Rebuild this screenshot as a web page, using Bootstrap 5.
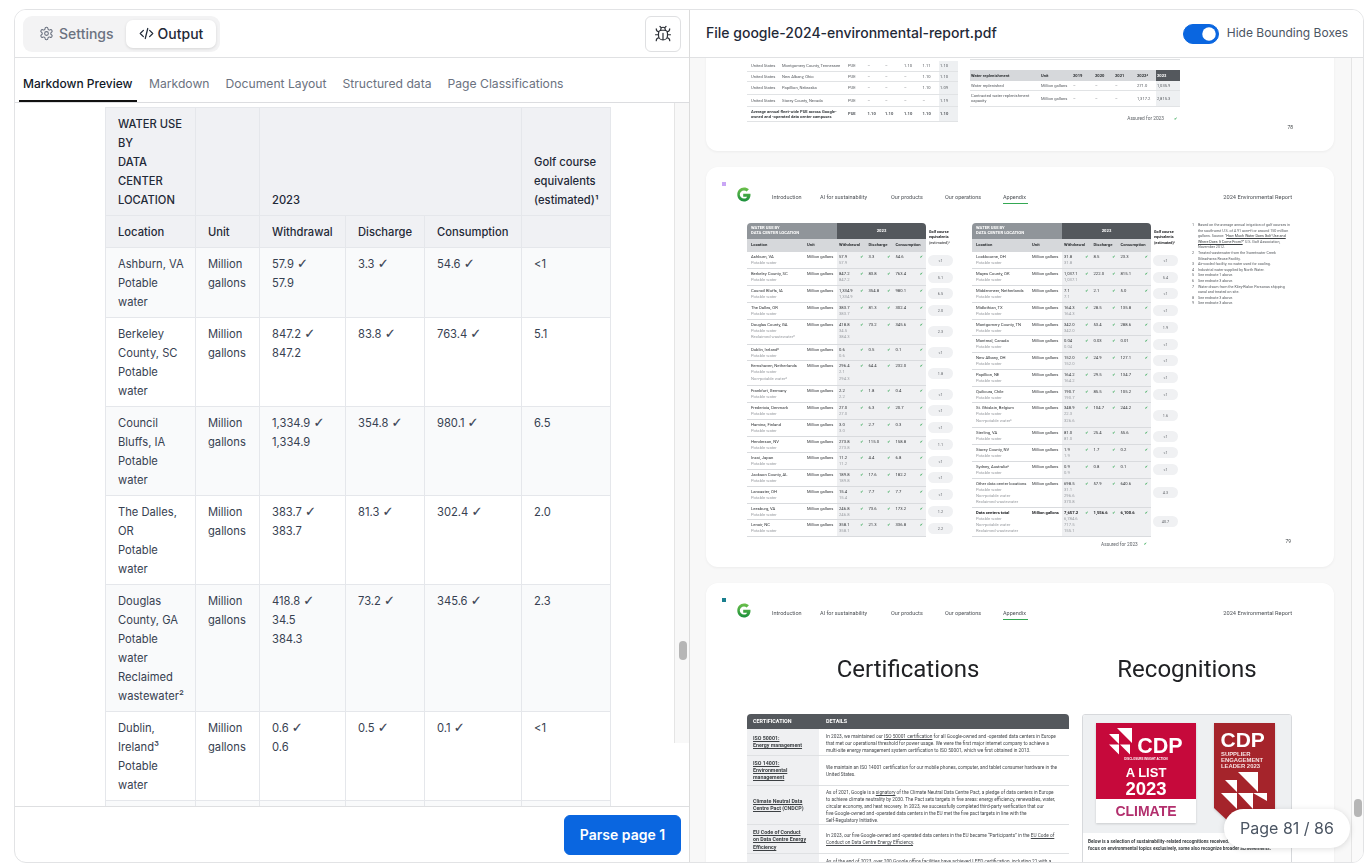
<!DOCTYPE html>
<html lang="en">
<head>
<meta charset="utf-8">
<title>Parse output</title>
<link rel="stylesheet" href="https://cdn.jsdelivr.net/npm/bootstrap@5.3.0/dist/css/bootstrap.min.css">
<style>
body{margin:0;padding:9px 5px 0 14px;height:863px;overflow:hidden;background:#fff;font-family:Inter,"Liberation Sans",sans-serif;color:#374151}
.shell{height:854px;border:1px solid #e2e3e5;border-radius:12px;overflow:hidden}
.leftp{width:675px;flex:none;border-right:1px solid #dcdcdc}
.rightp{flex:1 1 auto;min-width:0}
.topbar{height:48px;flex:none;border-bottom:1px solid #e0e1e3;background:#fff}
.seg{margin-left:8px;background:#f3f3f4;border-radius:9px;padding:4px;height:36px;width:197px}
.segb{height:28px;border:0;background:transparent;border-radius:7px;font-size:14px;font-weight:500;color:#6b7280;padding:0 12px 0 12px;display:flex;align-items:center;gap:5px}
.segb.on{background:#fff;color:#1f2937;box-shadow:0 1px 3px rgba(0,0,0,.12);margin-left:auto;width:90px;justify-content:center;gap:4px}
.bugb{width:36px;height:36px;margin-right:8px;border:1px solid #dfe0e2;border-radius:6px;background:#fff;padding:0;color:#2b2f36;display:flex;align-items:center;justify-content:center}
.tabbar{height:45px;flex:none;border-bottom:1px solid #dcdde0;padding-left:4px;gap:8px;flex-wrap:nowrap}
.tabbar .nav-link{height:44px;padding:10px 4px 0;display:flex;align-items:center;font-size:12.15px;color:#6b7280;border-bottom:2px solid transparent;border-radius:0}
.tabbar .nav-link.active{color:#111827;font-weight:500;font-size:12px;padding-top:9px;border-bottom-color:#111;width:118px;white-space:nowrap}
.leftbody{height:703px;flex:none;overflow:hidden}
.lscroll{flex:1 1 auto;overflow:hidden;padding:4px 0 0 90px}
.dtbl{width:506px;table-layout:fixed;font-size:11.2px;line-height:19px;border-top:1px solid #e5e7eb;border-left:1px solid #e5e7eb}
.dtbl td,.dtbl th{padding:7px 12px 5px;border-right:1px solid #e5e7eb;border-bottom:1px solid #e5e7eb;vertical-align:top}
.dtbl td:first-child,.dtbl th:first-child{padding-right:6px}
.dtbl th{background:#f0f1f4;color:#1f2937;font-weight:500;vertical-align:bottom}
.dtbl tbody tr:nth-child(odd) td{background:#f9fafb}
.ck{font-family:"DejaVu Sans",sans-serif;font-size:13px;line-height:1;-webkit-text-stroke:.2px currentColor}
.trackl{width:15px;height:640px;flex:none;background:#f8f8f8;border-left:1px solid #e5e5e5}
.thumb{background:#b6b6b6;border-radius:5px}
.trackl .thumb{width:8px;height:19px;margin:538px 0 0 4px}
.leftfoot{height:56px;flex:none;border-top:1px solid #dedfe1;padding:8px 8px 0 0}
.parseb{width:117px;height:40px;background:#0a66e0;border-color:#0a66e0;font-size:14px;font-weight:600;border-radius:6px;padding:0 0 2px;color:#fff}
.ftitle{margin:0 0 0 16px;font-size:14px;font-weight:500;color:#1f2937}
.togw{margin:0 15px 0 0;padding:0;min-height:0;gap:8px}
.togw .form-check-input{width:36px;height:20px;margin:0;float:none;background-color:#0a66e0;border-color:#0a66e0}
.togw label{font-size:12px;color:#4b5563;padding-bottom:2px}
.rarea{flex:1 1 auto;min-height:0;background:#f8f8f8;overflow:hidden}
.pages{width:661px;flex:none;padding:0 17px 0 16px;gap:16px}
.trackr{flex:1 1 auto;background:#fafafa;border-left:1px solid #e5e5e5}
.trackr .thumb{width:8px;height:18px;margin:741px 0 0 2px}
.sheet{height:400px;flex:none;background:#fff;border-radius:12px;box-shadow:0 1px 3px rgba(0,0,0,.05);font-family:Roboto,"Liberation Sans",sans-serif;color:#3c4043;position:relative;font-size:4px}
.sheet.first{margin-top:-307px}
.sinner{height:100%;filter:blur(.2px)}
.marker{position:absolute;left:16px;top:15px;width:4px;height:4px}
.mk1{background:#c9a6f5}.mk2{background:#1a7f8e}
.phead{padding:20px 42px 0 31px;height:56px;font-size:5.5px;color:#4d5156;align-items:flex-start}
.glogo{width:14px;height:15px;flex:none}
.pnav{margin-left:21px;margin-top:6px}
.pnav span:nth-child(1){width:48px}.pnav span:nth-child(2){width:71px}.pnav span:nth-child(3){width:54px}.pnav span:nth-child(4){width:58px}
.pnav span{display:block;white-space:nowrap}
.pnav .act{width:25px!important;border-bottom:.7px solid #34a853;padding-bottom:1.5px}
.prep{margin-left:auto;margin-top:6px;font-size:5.7px}
.pbody{padding-left:41px;gap:16px}
.twrap{width:209px}
.ptbl{width:209px;table-layout:fixed;line-height:6.2px;font-size:4.2px;color:#303336}
.ptbl .ph1{background:#90959a;color:#fff;font-weight:700;padding:1.5px 0 0 4px;height:16px;border-top-left-radius:4px;font-size:4.2px;line-height:5.6px;vertical-align:top}
.ptbl .ph2{background:#54585d;color:#fff;font-weight:700;text-align:center;border-top-right-radius:4px;vertical-align:middle}
.ptbl .phg{font-weight:700;color:#202124;font-size:3.8px;line-height:5.4px;padding:6px 0 0 3px;vertical-align:top}
.ptbl .ph3{background:#d6d8db;font-weight:700;color:#303336;height:13px;vertical-align:middle;padding:0 0 0 2px}
.ptbl .ph3.lc{padding-left:4px}
.ptbl .ph3.uc{padding-left:0}
.ptbl td{vertical-align:top;padding:2px 0 0 0;border-bottom:1px solid #d9dbde;height:16.75px}
.ptbl td.ln{padding-left:4px;white-space:nowrap}
.ptbl td.un{font-size:4.1px}
.ptbl td.vc{background:#eff0f2;padding:2px 3px 0 2px}
.ptbl td.gc{border-bottom:0;vertical-align:middle;padding:0 0 0 2px}
.ptbl tr.r3 td{height:25px}.ptbl tr.r4 td{height:29px}
.ptbl tr.bd .ln div:first-child,.ptbl tr.bd .un,.ptbl tr.bd .vl{font-weight:700;color:#202124}
.s{color:#999ca1}
.vl{display:flex;justify-content:space-between}
.vl i{font-style:normal;color:#2fa650;font-size:3.8px;font-family:"DejaVu Sans",sans-serif}
.gp{display:block;width:25px;height:11px;line-height:11px;text-align:center;background:#f0f1f3;border-radius:6px;color:#5f6368;font-size:3.8px}
.assured{width:179px;margin-top:4px;padding-right:4px;justify-content:flex-end;gap:6px;font-size:4.8px;color:#5f6368}
.assured i{font-style:normal;color:#2fa650;font-family:"DejaVu Sans",sans-serif;font-size:3.8px}
.fnc{width:99px;height:324px;margin-left:-5px}
.fnl{list-style:none;padding:0 0 0 6px;margin:0;font-size:3.7px;line-height:5.6px;color:#55595e}
.fnl li::before{content:counter(list-item);display:inline-block;width:6px;margin-left:-6px}
.fnl u{color:#3c4043}
.pno{margin-top:auto;text-align:right;font-size:4.8px;color:#3c4043;line-height:6px;margin-bottom:2px}
.p78{padding:0 41px 0 41px;height:100%;align-items:flex-end}
.gtbl{table-layout:fixed;width:100%;font-size:4.1px;line-height:5px;color:#55595e}
.gtbl td,.gtbl th{white-space:nowrap;padding:0;vertical-align:middle}
.g1{width:211px;margin-bottom:29px}
.g1 td{border-bottom:1.2px solid #e1e3e5}
.g1 .q,.g2 .q{background:#eef0f2}
.g2w{width:210px;margin:0 0 30.5px 12px}
.g2 th{background:#d6d8db;font-weight:700;color:#303336;height:11px}
.g2 th.dk{background:#54585d;color:#fff}
.g2 td{border-bottom:1.2px solid #e1e3e5;height:9.5px}
.g2 tr.tall td{height:16px}
.gline{height:1px;background:#dfe1e3;margin-bottom:10px}
.as78{justify-content:flex-end;gap:10px;font-size:4.8px;color:#5f6368;margin:9px 3px 0 0;line-height:5px}
.as78 i{font-style:normal;color:#2fa650;font-size:3.8px}
.no78{margin:0 0 20px auto;font-size:4.8px;color:#3c4043}
.ttls{padding-left:41px;gap:13px;height:75px;font-size:24px;color:#202124;line-height:1}
.ttls div:first-child{width:322px;text-align:center;padding-top:18px}
.ttls div:last-child{width:210px;text-align:center;padding-top:18px}
.cbody{padding-left:41px;gap:13px}
.ctbl{width:322px;flex:none;table-layout:fixed;font-size:4.75px;line-height:7px;color:#44474b}
.ctbl th{background:#54585d;color:#fff;font-weight:700;height:15px;vertical-align:middle;padding-left:7px;font-size:5.4px}
.ctbl th:first-child{border-top-left-radius:4px;padding-left:6px;width:72px}
.ctbl th:last-child{border-top-right-radius:4px}
.ctbl td{border-bottom:1px solid #dfe1e3;padding:3.5px 0 0 7px;vertical-align:top;white-space:nowrap}
.ctbl td:first-child{background:#eff0f2;padding-left:6px;font-weight:700;color:#3c4043;font-size:5.3px;line-height:7.4px}
.ctbl u{text-underline-offset:.6px}
.crow1 td{height:26px}.crow2 td{height:30px}.crow3 td{height:38px}.crow4 td{height:29px}
.ctbl td.pp4{padding-top:4px}.ctbl td.pp6{padding-top:6px}.ctbl td.pp7{padding-top:7px}.ctbl td.pp8{padding-top:8.5px}.ctbl td.pp12{padding-top:12px}
.rbox{width:210px;height:160px;border:1px solid #d7d9dc;border-radius:3px;overflow:hidden;background:#fff}
.rtop{background:#eef0f2;height:118px;padding:8px 0 0 13px;gap:18px}
.rtop svg{flex:none;filter:drop-shadow(0 1px 1px rgba(0,0,0,.15))}
.rtxt{padding:5px 0 0 5px;font-size:4.7px;line-height:7px;font-weight:700;color:#3c4043;white-space:nowrap}
.pill{position:absolute;right:13px;bottom:14px;width:126px;height:39px;background:#fff;border-radius:20px;box-shadow:0 1px 6px rgba(0,0,0,.13);font-size:16px;color:#4b5563;line-height:39px;text-align:center;font-family:Inter,sans-serif}
</style>
</head>
<body>
<div class="shell d-flex">
  <section class="leftp d-flex flex-column">
    <div class="topbar d-flex align-items-center justify-content-between">
      <div class="seg d-flex align-items-center">
        <button class="segb" type="button">
          <svg width="15" height="15" viewBox="0 0 24 24" fill="none" stroke="currentColor" stroke-width="1.7" stroke-linecap="round" stroke-linejoin="round"><path d="M12.22 2h-.44a2 2 0 0 0-2 2v.18a2 2 0 0 1-1 1.73l-.43.25a2 2 0 0 1-2 0l-.15-.08a2 2 0 0 0-2.73.73l-.22.38a2 2 0 0 0 .73 2.73l.15.1a2 2 0 0 1 1 1.72v.51a2 2 0 0 1-1 1.74l-.15.09a2 2 0 0 0-.73 2.73l.22.38a2 2 0 0 0 2.73.73l.15-.08a2 2 0 0 1 2 0l.43.25a2 2 0 0 1 1 1.73V20a2 2 0 0 0 2 2h.44a2 2 0 0 0 2-2v-.18a2 2 0 0 1 1-1.73l.43-.25a2 2 0 0 1 2 0l.15.08a2 2 0 0 0 2.73-.73l.22-.39a2 2 0 0 0-.73-2.73l-.15-.08a2 2 0 0 1-1-1.74v-.5a2 2 0 0 1 1-1.74l.15-.09a2 2 0 0 0 .73-2.73l-.22-.38a2 2 0 0 0-2.73-.73l-.15.08a2 2 0 0 1-2 0l-.43-.25a2 2 0 0 1-1-1.73V4a2 2 0 0 0-2-2z"/><circle cx="12" cy="12" r="3"/></svg>
          Settings</button>
        <button class="segb on" type="button">
          <svg width="15" height="15" viewBox="0 0 24 24" fill="none" stroke="currentColor" stroke-width="2" stroke-linecap="round" stroke-linejoin="round"><path d="m7 7-5 5 5 5M17 7l5 5-5 5M14 4l-4 16"/></svg>
          Output</button>
      </div>
      <button class="bugb" type="button" aria-label="Debug">
        <svg width="18" height="18" viewBox="0 0 24 24" fill="none" stroke="currentColor" stroke-width="1.6" stroke-linecap="round" stroke-linejoin="round"><path d="m8 2 1.88 1.88M14.12 3.88 16 2M9 7.13v-1a3.003 3.003 0 1 1 6 0v1"/><path d="M12 20c-3.3 0-6-2.7-6-6v-3a4 4 0 0 1 4-4h4a4 4 0 0 1 4 4v3c0 3.3-2.7 6-6 6M12 20v-9M6.53 9C4.6 8.8 3 7.1 3 5M6 13H2M3 21c0-2.1 1.7-3.9 3.8-4M20.97 5c0 2.1-1.6 3.8-3.5 4M22 13h-4M17.2 17c2.1.1 3.8 1.9 3.8 4"/></svg>
      </button>
    </div>
    <ul class="nav tabbar">
      <li class="nav-item"><a class="nav-link active" href="#">Markdown Preview</a></li>
      <li class="nav-item"><a class="nav-link" href="#">Markdown</a></li>
      <li class="nav-item"><a class="nav-link" href="#">Document Layout</a></li>
      <li class="nav-item"><a class="nav-link" href="#">Structured data</a></li>
      <li class="nav-item"><a class="nav-link" href="#">Page Classifications</a></li>
    </ul>
    <div class="leftbody d-flex">
      <div class="lscroll">
        <table class="dtbl">
          <colgroup><col style="width:90px"><col style="width:64px"><col style="width:86px"><col style="width:79px"><col style="width:97px"><col style="width:89px"></colgroup>
          <thead>
            <tr><th>WATER USE BY<br>DATA CENTER LOCATION</th><th></th><th colspan="3">2023</th><th>Golf course equivalents (estimated)¹</th></tr>
            <tr><th>Location</th><th>Unit</th><th>Withdrawal</th><th>Discharge</th><th>Consumption</th><th></th></tr>
          </thead>
          <tbody>
            <tr><td>Ashburn, VA<br>Potable water</td><td>Million gallons</td><td>57.9 <span class="ck">✓</span><br>57.9</td><td>3.3 <span class="ck">✓</span></td><td>54.6 <span class="ck">✓</span></td><td>&lt;1</td></tr>
            <tr><td>Berkeley County, SC<br>Potable water</td><td>Million gallons</td><td>847.2 <span class="ck">✓</span><br>847.2</td><td>83.8 <span class="ck">✓</span></td><td>763.4 <span class="ck">✓</span></td><td>5.1</td></tr>
            <tr><td>Council Bluffs, IA<br>Potable water</td><td>Million gallons</td><td>1,334.9 <span class="ck">✓</span><br>1,334.9</td><td>354.8 <span class="ck">✓</span></td><td>980.1 <span class="ck">✓</span></td><td>6.5</td></tr>
            <tr><td>The Dalles, OR<br>Potable water</td><td>Million gallons</td><td>383.7 <span class="ck">✓</span><br>383.7</td><td>81.3 <span class="ck">✓</span></td><td>302.4 <span class="ck">✓</span></td><td>2.0</td></tr>
            <tr><td>Douglas County, GA<br>Potable water<br>Reclaimed wastewater²</td><td>Million gallons</td><td>418.8 <span class="ck">✓</span><br>34.5<br>384.3</td><td>73.2 <span class="ck">✓</span></td><td>345.6 <span class="ck">✓</span></td><td>2.3</td></tr>
            <tr><td>Dublin, Ireland³<br>Potable water</td><td>Million gallons</td><td>0.6 <span class="ck">✓</span><br>0.6</td><td>0.5 <span class="ck">✓</span></td><td>0.1 <span class="ck">✓</span></td><td>&lt;1</td></tr>
            <tr><td>&nbsp;</td><td></td><td></td><td></td><td></td><td></td></tr>
          </tbody>
        </table>
      </div>
      <div class="trackl"><div class="thumb"></div></div>
    </div>
    <div class="leftfoot d-flex justify-content-end align-items-start">
      <button class="btn btn-primary parseb" type="button">Parse page 1</button>
    </div>
  </section>

  <section class="rightp d-flex flex-column">
    <div class="topbar d-flex align-items-center justify-content-between">
      <h1 class="ftitle">File google-2024-environmental-report.pdf</h1>
      <div class="form-check form-switch togw d-flex align-items-center">
        <input class="form-check-input" type="checkbox" role="switch" id="hb" checked>
        <label class="form-check-label" for="hb">Hide Bounding Boxes</label>
      </div>
    </div>
    <div class="rarea d-flex position-relative">
      <div class="pages d-flex flex-column">
        <article class="sheet first">
          <div class="sinner d-flex p78">
            <div class="g1">
              <table class="gtbl">
                <colgroup><col style="width:4px"><col style="width:31px"><col style="width:66px"><col style="width:19.5px"><col style="width:17.5px"><col style="width:19px"><col style="width:18.5px"><col style="width:16.5px"><col></colgroup>
                <tbody id="g1b"></tbody>
              </table>
            </div>
            <div class="g2w">
              <div class="gline"></div>
              <table class="gtbl g2">
                <colgroup><col style="width:71px"><col style="width:32px"><col style="width:22px"><col style="width:20px"><col style="width:22px"><col style="width:19px"><col></colgroup>
                <thead><tr><th>&nbsp;Water replenishment</th><th>Unit</th><th>2019</th><th>2020</th><th>2021</th><th>2022⁴</th><th class="dk">&nbsp;2023</th></tr></thead>
                <tbody>
                  <tr><td>&nbsp;Water replenished</td><td>Million gallons</td><td>–</td><td>–</td><td>–</td><td>271.0</td><td class="q">&nbsp;1,035.9</td></tr>
                  <tr class="tall"><td>&nbsp;Contracted water replenishment<br>&nbsp;capacity</td><td>Million gallons</td><td>–</td><td>–</td><td>–</td><td>1,317.2</td><td class="q">&nbsp;2,815.3</td></tr>
                </tbody>
              </table>
              <div class="as78 d-flex"><span>Assured for 2023</span><i>✔</i></div>
            </div>
            <div class="no78">78</div>
          </div>
        </article>

        <article class="sheet">
          <span class="marker mk1"></span>
          <div class="sinner">
            <header class="phead d-flex">
              <svg class="glogo" viewBox="0 0 14 15"><defs><linearGradient id="gg1" x1="0" y1="0" x2="0" y2="1"><stop offset="0" stop-color="#6cc04a"/><stop offset="1" stop-color="#1a8f3c"/></linearGradient></defs><path d="M7 .5C3.2.5.3 3.6.3 7.5s2.9 7 6.7 7c3.700 0 6.500-2.700 6.500-6.500 0-.5 0-.9-.1-1.300H6.200v3h3.900C9.700 11 8.500 11.600 7 11.600c-2.300 0-4.200-1.900-4.200-4.100S4.700 3.400 7 3.400c1 0 2 .4 2.700 1l2.200-2.200C10.600 1.100 8.900.5 7 .5z" fill="url(#gg1)"/></svg>
              <nav class="pnav d-flex"><span>Introduction</span><span>AI for sustainability</span><span>Our products</span><span>Our operations</span><span class="act">Appendix</span></nav>
              <div class="prep">2024 Environmental Report</div>
            </header>
            <div class="pbody d-flex">
              <div class="twrap">
                <table class="ptbl">
                  <colgroup><col style="width:60px"><col style="width:30px"><col style="width:29.500px"><col style="width:27px"><col style="width:32.500px"><col></colgroup>
                  <thead>
                    <tr><th class="ph1" colspan="2">WATER USE BY<br>DATA CENTER LOCATION</th><th class="ph2" colspan="3">2023</th><th class="phg" rowspan="2">Golf course<br>equivalents<br><span class="fw-normal">(estimated)¹</span></th></tr>
                    <tr><th class="ph3 lc">Location</th><th class="ph3 uc">Unit</th><th class="ph3">Withdrawal</th><th class="ph3">Discharge</th><th class="ph3">Consumption</th></tr>
                  </thead>
                  <tbody id="t1"></tbody>
                </table>
              </div>
              <div class="twrap">
                <table class="ptbl">
                  <colgroup><col style="width:60px"><col style="width:30px"><col style="width:29.500px"><col style="width:27px"><col style="width:32.500px"><col></colgroup>
                  <thead>
                    <tr><th class="ph1" colspan="2">WATER USE BY<br>DATA CENTER LOCATION</th><th class="ph2" colspan="3">2023</th><th class="phg" rowspan="2">Golf course<br>equivalents<br>(estimated)¹</th></tr>
                    <tr><th class="ph3 lc">Location</th><th class="ph3 uc">Unit</th><th class="ph3">Withdrawal</th><th class="ph3">Discharge</th><th class="ph3">Consumption</th></tr>
                  </thead>
                  <tbody id="t2"></tbody>
                </table>
                <div class="assured d-flex"><span>Assured for 2023</span><i>✔</i></div>
              </div>
              <div class="fnc d-flex flex-column">
                <ol class="fnl">
                  <li>Based on the average annual irrigation of golf courses in<br>the southwest U.S. of 4.91 acre-ft or around 150 million<br>gallons. Source: “<u>How Much Water Does Golf Use and<br>Where Does It Come From?</u>” U.S. Golf Association,<br>November 2012.</li>
                  <li>Treated wastewater from the Sweetwater Creek<br>Gilead-area Reuse Facility.</li>
                  <li>Air-cooled facility; no water used for cooling.</li>
                  <li>Industrial water supplied by North Water.</li>
                  <li>See endnote 1 above.</li>
                  <li>See endnote 3 above.</li>
                  <li>Water drawn from the Kiley-Rialon Parsonas shipping<br>canal and treated on site.</li>
                  <li>See endnote 3 above.</li>
                  <li>See endnote 3 above.</li>
                </ol>
                <div class="pno">79</div>
              </div>
            </div>
          </div>
        </article>

        <article class="sheet">
          <span class="marker mk2"></span>
          <div class="sinner">
            <header class="phead d-flex">
              <svg class="glogo" viewBox="0 0 14 15"><path d="M7 .5C3.2.5.3 3.6.3 7.500s2.900 7 6.700 7c3.700 0 6.500-2.700 6.500-6.500 0-.5 0-.9-.1-1.300H6.200v3h3.900C9.700 11 8.500 11.600 7 11.600c-2.300 0-4.200-1.900-4.200-4.100S4.700 3.400 7 3.400c1 0 2 .4 2.700 1l2.200-2.200C10.600 1.100 8.900.5 7 .5z" fill="url(#gg1)"/></svg>
              <nav class="pnav d-flex"><span>Introduction</span><span>AI for sustainability</span><span>Our products</span><span>Our operations</span><span class="act">Appendix</span></nav>
              <div class="prep">2024 Environmental Report</div>
            </header>
            <div class="ttls d-flex"><div>Certifications</div><div>Recognitions</div></div>
            <div class="cbody d-flex align-items-start">
              <table class="ctbl">
                <thead><tr><th>CERTIFICATION</th><th>DETAILS</th></tr></thead>
                <tbody>
                  <tr class="crow1"><td class="pp6"><u>ISO 50001:<br>Energy management</u></td><td>In 2023, we maintained our <u>ISO 50001 certification</u> for all Google-owned and -operated data centers in Europe<br>that met our operational threshold for power usage. We were the first major internet company to achieve a<br>multi-site energy management system certification to ISO 50001, which we first obtained in 2013.</td></tr>
                  <tr class="crow2"><td class="pp4"><u>ISO 14001:<br>Environmental<br>management</u></td><td class="pp8">We maintain an ISO 14001 certification for our mobile phones, computer, and tablet consumer hardware in the<br>United States.</td></tr>
                  <tr class="crow3"><td class="pp12"><u>Climate Neutral Data<br>Centre Pact</u> (CNDCP)</td><td>As of 2021, Google is a <u>signatory</u> of the Climate Neutral Data Centre Pact, a pledge of data centers in Europe<br>to achieve climate neutrality by 2030. The Pact sets targets in five areas: energy efficiency, renewables, water,<br>circular economy, and heat recovery. In 2023, we successfully completed third-party verification that our<br>five Google-owned and -operated data centers in the EU met the five pact targets in line with the<br>Self-Regulatory Initiative.</td></tr>
                  <tr class="crow4"><td class="pp4"><u>EU Code of Conduct<br>on Data Centre Energy<br>Efficiency</u></td><td class="pp7">In 2023, our five Google-owned and -operated data centers in the EU became “Participants” in the <u>EU Code of<br>Conduct on Data Centre Energy Efficiency</u>.</td></tr>
                  <tr><td></td><td>As of the end of 2023, over 200 Google office facilities have achieved LEED certification, including 21 with a</td></tr>
                </tbody>
              </table>
              <div class="rbox">
                <div class="rtop d-flex">
                  <svg width="100" height="100" viewBox="0 0 100 100" font-family="Liberation Sans, sans-serif" font-weight="700" text-anchor="middle">
                    <rect width="100" height="100" fill="#fff"/><rect width="100" height="76" fill="#c6093b"/>
                    <g fill="#fff"><path d="M21 5h15v15zM13 11h10v10zM13 21.500h10v10zM24 21.500h10v10z"/></g>
                    <text x="64" y="30" font-size="21.500" fill="#fff">CDP</text>
                    <text x="50" y="36.500" font-size="2.900" fill="#fff">DISCLOSURE INSIGHT ACTION</text>
                    <text x="50" y="54" font-size="13" fill="#fff">A LIST</text>
                    <text x="50" y="72" font-size="18.500" fill="#fff">2023</text>
                    <text x="50" y="93" font-size="14" fill="#b22f6d">CLIMATE</text>
                  </svg>
                  <svg width="61" height="100" viewBox="0 0 61 100" font-family="Liberation Sans, sans-serif" font-weight="700">
                    <path d="M0 0h61v100H16L0 85z" fill="#a5242b"/>
                    <text x="6.500" y="24" font-size="21" fill="#fff">CDP</text>
                    <g font-size="5.900" fill="#f6e3e3"><text x="7" y="32.500">SUPPLIER</text><text x="7" y="38.500">ENGAGEMENT</text><text x="7" y="44.500">LEADER 2023</text></g>
                    <path d="M24 49h20v20zM11 57h12v12zM7 70h16v16zM24 70h15v16zM39 70h14v8z" fill="#fff"/>
                  </svg>
                </div>
                <div class="rtxt">Below is a selection of sustainability-related recognitions received. While many of these<br>focus on environmental topics exclusively, some also recognize broader achievements.</div>
              </div>
            </div>
          </div>
        </article>
      </div>
      <div class="trackr"><div class="thumb"></div></div>
      <div class="pill">Page 81 / 86</div>
    </div>
  </section>
</div>
<script>
var P='Potable water',N='Non-potable water',R='Reclaimed wastewater';
var A=[
['Ashburn, VA',[P],'57.9','3.3','54.6','<1',['57.9']],
['Berkeley County, SC',[P],'847.2','83.8','763.4','5.1',['847.2']],
['Council Bluffs, IA',[P],'1,334.9','354.8','980.1','6.5',['1,334.9']],
['The Dalles, OR',[P],'383.7','81.3','302.4','2.0',['383.7']],
['Douglas County, GA',[P,R+'²'],'418.8','73.2','345.6','2.3',['34.5','384.3']],
['Dublin, Ireland³',[P],'0.6','0.5','0.1','<1',['0.6']],
['Eemshaven, Netherlands',[P,N+'⁴'],'296.4','64.4','232.0','1.8',['2.1','294.3']],
['Frankfurt, Germany',[P],'2.2','1.8','0.4','<1',['2.2']],
['Fredericia, Denmark',[P],'27.0','6.3','20.7','<1',['27.0']],
['Hamina, Finland',[P],'3.0','2.7','0.3','<1',['3.0']],
['Henderson, NV',[P],'273.8','115.0','158.8','1.1',['273.8']],
['Inzai, Japan',[P],'11.2','4.4','6.8','<1',['11.2']],
['Jackson County, AL',[P],'189.8','17.6','182.2','<1',['189.8']],
['Lancaster, OH',[P],'15.4','7.7','7.7','<1',['15.4']],
['Leesburg, VA',[P],'246.8','73.6','173.2','1.2',['246.8']],
['Lenoir, NC',[P],'358.1','21.3','336.8','2.2',['358.1']]];
var B=[
['Lockbourne, OH',[P],'31.8','8.5','23.3','<1',['31.8']],
['Mayes County, OK',[P],'1,037.1','222.0','815.1','5.4',['1,037.1']],
['Middenmeer, Netherlands',[P],'7.1','2.1','5.0','<1',['7.1']],
['Midlothian, TX',[P],'164.3','28.5','135.8','<1',['164.3']],
['Montgomery County, TN',[P],'342.0','53.4','288.6','1.9',['342.0']],
['Montreal, Canada',[P],'0.04','0.03','0.01','<1',['0.04']],
['New Albany, OH',[P],'152.0','24.9','127.1','<1',['152.0']],
['Papillion, NE',[P],'164.2','29.5','134.7','<1',['164.2']],
['Quilicura, Chile',[P],'190.7','85.5','105.2','<1',['190.7']],
['St. Ghislain, Belgium',[P,N+'⁵'],'348.9','104.7','244.2','1.6',['22.3','326.6']],
['Sterling, VA',[P],'81.0','25.4','55.6','<1',['81.0']],
['Storey County, NV',[P],'1.9','1.7','0.2','<1',['1.9']],
['Sydney, Australia⁶',[P],'0.9','0.8','0.1','<1',['0.9']],
['Other data center locations',[P,N,R],'698.5','57.9','640.6','4.3',['31.1','296.6','370.8'],0],
['Data centers total',[P,N,R],'7,657.2','1,556.6','6,100.6','40.7',['6,784.6','717.5','155.1'],1]];
function esc(s){return s.replace(/</g,'&lt;')}
function rows(d){return d.map(function(r){
 var n=r[1].length+1,c=(n==3?'r3':n==4?'r4':'')+(r[7]?' bd':'');
 var sub=function(a){return a.map(function(x){return '<div class="s">'+x+'</div>'}).join('')};
 var v=function(x){return '<div class="vl"><span>'+x+'</span><i>✔</i></div>'};
 return '<tr class="'+c+'"><td class="ln"><div>'+r[0]+'</div>'+sub(r[1])+'</td><td class="un">Million gallons</td><td class="vc">'+v(r[2])+sub(r[6])+'</td><td class="vc">'+v(r[3])+'</td><td class="vc">'+v(r[4])+'</td><td class="gc"><span class="gp">'+esc(r[5])+'</span></td></tr>';
}).join('')}
document.getElementById('t1').innerHTML=rows(A);
document.getElementById('t2').innerHTML=rows(B);
var G=[['Montgomery County, Tennessee',['–','–','1.10','1.11','1.10'],11],['New Albany, Ohio',['–','–','–','1.10','1.10'],10],['Papillion, Nebraska',['–','–','–','1.10','1.09'],12.500],['Storey County, Nevada',['–','–','–','–','1.19'],12]];
var h=G.map(function(r){var m=r[1].map(function(x,i){return '<td'+(i==4?' class="q"':'')+'>'+(i==4?'&nbsp;':'')+x+'</td>'}).join('');
 return '<tr style="height:'+r[2]+'px"><td></td><td>United States</td><td>'+r[0]+'</td><td>PUE</td>'+m+'</tr>'}).join('');
h+='<tr class="fw-bold" style="height:15.500px"><td></td><td colspan="2" style="color:#3c4043">Average annual fleet-wide PUE across Google-<br>owned and -operated data center campuses</td><td>PUE</td><td>1.10</td><td>1.10</td><td>1.10</td><td>1.10</td><td class="q">&nbsp;1.10</td></tr>';
document.getElementById('g1b').innerHTML=h;
</script>
<script src="https://cdn.jsdelivr.net/npm/bootstrap@5.3.0/dist/js/bootstrap.bundle.min.js"></script>
</body>
</html>
